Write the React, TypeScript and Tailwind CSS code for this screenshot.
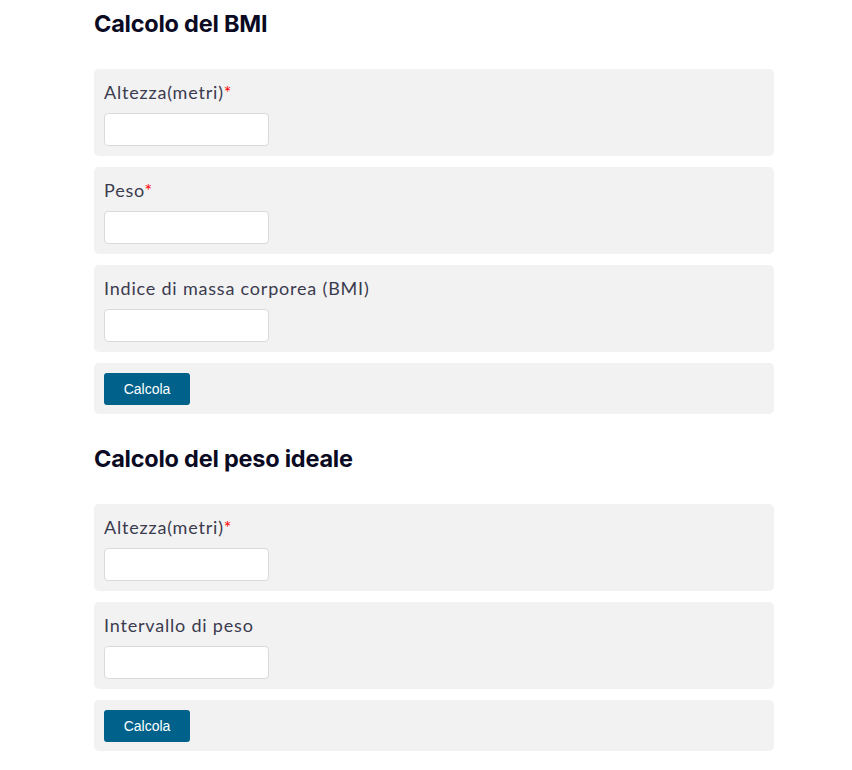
import React from 'react';

interface Field {
  label: string;
  required?: boolean;
}

interface Section {
  title: string;
  fields: Field[];
}

const SECTIONS: Section[] = [
  {
    title: 'Calcolo del BMI',
    fields: [
      { label: 'Altezza(metri)', required: true },
      { label: 'Peso', required: true },
      { label: 'Indice di massa corporea (BMI)' },
    ],
  },
  {
    title: 'Calcolo del peso ideale',
    fields: [
      { label: 'Altezza(metri)', required: true },
      { label: 'Intervallo di peso' },
    ],
  },
];

function FieldRow({ label, required }: Field) {
  return (
    <div className="rounded-[5px] bg-[#f2f2f2] px-[10px] pt-[10px] pb-[10px]">
      <label className="block font-['Lato','Noto_Sans',sans-serif] text-[18px] leading-[26px] tracking-[0.8px] text-[#3b3b4f]">
        {label}
        {required ? <span className="text-[#ff0000]">*</span> : null}
      </label>
      <input
        type="text"
        className="mt-[8px] block h-[33px] w-[165px] rounded-[4px] border border-[#dadada] bg-white px-2 outline-none"
      />
    </div>
  );
}

export default function App() {
  return (
    <div className="min-h-screen bg-white">
      <div className="ml-[94px] w-[680px] pt-[7px]">
        {SECTIONS.map((section, i) => (
          <section key={section.title} className={i > 0 ? 'mt-[28px]' : ''}>
            <h2 className="font-['Inter',sans-serif] text-[23.5px] font-bold leading-[34px] tracking-[-0.01em] text-[#0a0a23]">
              {section.title}
            </h2>
            <div className="mt-[28px] flex flex-col gap-[11px]">
              {section.fields.map((f) => (
                <FieldRow key={f.label} {...f} />
              ))}
              <div className="rounded-[5px] bg-[#f2f2f2] px-[10px] pt-[10px] pb-[9px]">
                <button
                  type="button"
                  className="h-[32px] w-[86px] rounded-[3px] bg-[#00628b] font-['Liberation_Sans',Arial,sans-serif] text-[14px] text-white"
                >
                  Calcola
                </button>
              </div>
            </div>
          </section>
        ))}
      </div>
    </div>
  );
}
